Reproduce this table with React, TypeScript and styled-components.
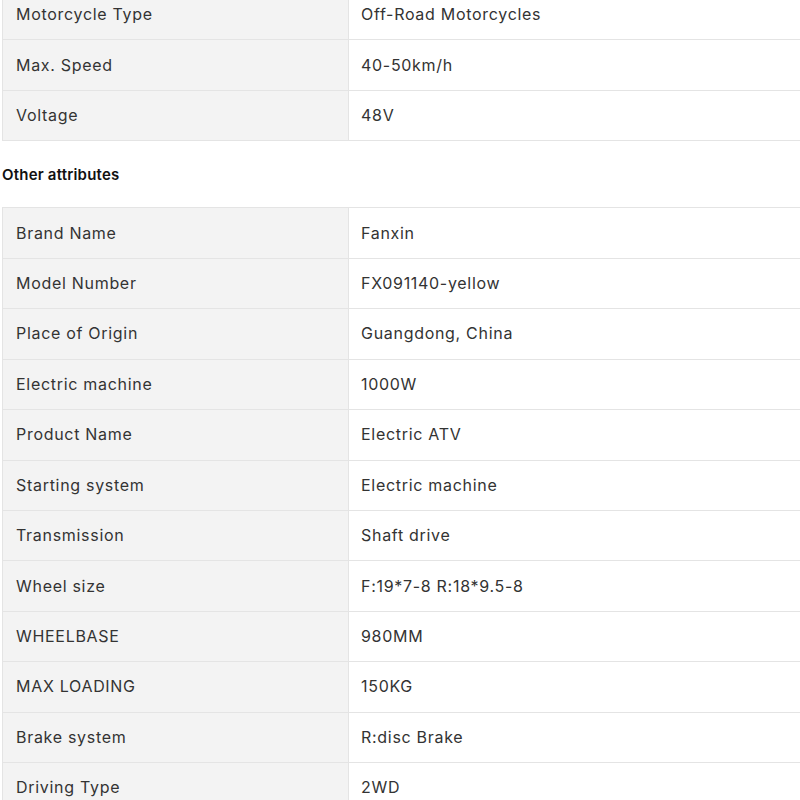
import React from "react";
import styled, { createGlobalStyle } from "styled-components";

const Global = createGlobalStyle`
  html, body { margin: 0; padding: 0; background: #fff; overflow: hidden; }
  body { font-family: Inter, "Open Sans", Arial, sans-serif; }
`;

const Page = styled.div`
  padding-left: 2px;
  margin-top: -11px;
  display: flex;
  flex-direction: column;
`;

const Table = styled.div`
  display: grid;
  grid-template-columns: 346px 1fr;
  border-top: 1px solid #e4e4e4;
  border-left: 1px solid #e4e4e4;
  width: calc(100% + 20px);
`;

const Cell = styled.div<{ $label?: boolean }>`
  box-sizing: border-box;
  height: 50.45px;
  display: flex;
  align-items: center;
  border-bottom: 1px solid #e4e4e4;
  border-right: 1px solid #e4e4e4;
  background: ${(p) => (p.$label ? "#f3f3f3" : "#fff")};
  padding-left: ${(p) => (p.$label ? "13px" : "12px")};
  padding-bottom: 1px;
  font-size: 16px;
  color: #333;
  letter-spacing: 0.7px;
`;

const Heading = styled.div`
  font-size: 15px;
  font-weight: 600;
  color: #111;
  line-height: 20px;
  letter-spacing: 0.2px;
  margin: 24px 0 22px;
`;

const first: [string, string][] = [
  ["Motorcycle Type", "Off-Road Motorcycles"],
  ["Max. Speed", "40-50km/h"],
  ["Voltage", "48V"],
];

const other: [string, string][] = [
  ["Brand Name", "Fanxin"],
  ["Model Number", "FX091140-yellow"],
  ["Place of Origin", "Guangdong, China"],
  ["Electric machine", "1000W"],
  ["Product Name", "Electric ATV"],
  ["Starting system", "Electric machine"],
  ["Transmission", "Shaft drive"],
  ["Wheel size", "F:19*7-8 R:18*9.5-8"],
  ["WHEELBASE", "980MM"],
  ["MAX LOADING", "150KG"],
  ["Brake system", "R:disc Brake"],
  ["Driving Type", "2WD"],
];

function Attrs({ rows }: { rows: [string, string][] }) {
  return (
    <Table>
      {rows.map(([k, v]) => (
        <React.Fragment key={k}>
          <Cell $label>{k}</Cell>
          <Cell>{v}</Cell>
        </React.Fragment>
      ))}
    </Table>
  );
}

export default function App() {
  return (
    <>
      <Global />
      <Page>
        <Attrs rows={first} />
        <Heading>Other attributes</Heading>
        <Attrs rows={other} />
      </Page>
    </>
  );
}
